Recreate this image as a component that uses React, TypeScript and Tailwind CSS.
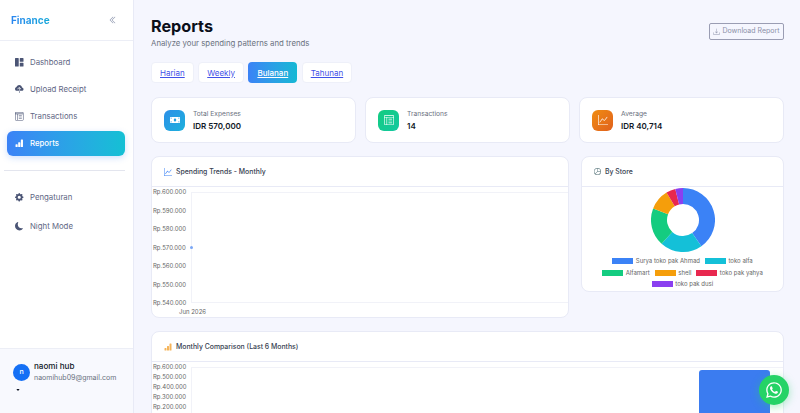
import React from 'react';
import { FaWhatsapp, FaMoneyBill } from 'react-icons/fa';
import {
  BsGrid1X2Fill,
  BsCloudUploadFill,
  BsLayoutTextWindowReverse,
  BsBarChartFill,
  BsGearFill,
  BsMoonFill,
  BsDownload,
  BsGraphUp,
  BsPieChart,
  BsChevronDoubleLeft,
  BsCaretDownFill,
} from 'react-icons/bs';

const NavItem = ({ icon, label, active }: { icon: React.ReactNode; label: string; active?: boolean }) => (
  <div className={`flex h-[25px] items-center gap-[6px] rounded-[6px] px-2 text-[7.8px] ${active ? 'bg-gradient-to-r from-[#3b82f6] to-[#14c0d4] font-medium text-white shadow-[0_2px_6px_rgba(59,130,246,0.25)]' : 'text-[#5f6785]'}`}>
    <span className={`flex w-[9px] justify-center text-[8.5px] ${active ? 'text-white' : 'text-[#4b5575]'}`}>{icon}</span>
    <span className="mt-[1px]">{label}</span>
  </div>
);

const Tab = ({ label, active }: { label: string; active?: boolean }) => (
  <a className={`flex h-[21px] items-center rounded-[4px] text-[8px] underline ${active ? 'bg-gradient-to-r from-[#3b82f6] to-[#14b8d4] px-[9px] font-medium text-white' : 'border border-[#eef0f9] bg-white px-[8px] text-[#3f51e8]'}`}>
    {label}
  </a>
);

const StatCard = ({ icon, gradient, label, value }: { icon: React.ReactNode; gradient: string; label: string; value: string }) => (
  <div className="flex h-[46px] flex-1 items-center gap-[8px] rounded-[8px] border border-[#e8eaf6] bg-white px-3">
    <div className={`flex h-[21px] w-[21px] items-center justify-center rounded-[6px] text-[10px] text-white ${gradient}`}>{icon}</div>
    <div>
      <div className="text-[6.7px] leading-[11px] text-[#6b7280]">{label}</div>
      <div className="text-[8px] font-semibold leading-[12px] text-[#111827]">{value}</div>
    </div>
  </div>
);

const CardHeader = ({ icon, title }: { icon: React.ReactNode; title: string }) => (
  <div className="flex h-[30px] items-center gap-[4px] border-b border-[#e8eaf6] pl-3 text-[6.9px] font-medium text-[#374151]">
    {icon}
    <span className="mt-[2px]">{title}</span>
  </div>
);

// donut segments, angles in degrees clockwise from the top
const segments = [
  { from: 0, to: 145, color: '#3b82f6' },
  { from: 145, to: 222, color: '#14c0d8' },
  { from: 222, to: 291, color: '#14cc80' },
  { from: 291, to: 329, color: '#f59e0b' },
  { from: 329, to: 346, color: '#e8284f' },
  { from: 346, to: 360, color: '#8b3ff0' },
];

const arc = (from: number, to: number) => {
  const p = (a: number, r: number) => {
    const t = (a * Math.PI) / 180;
    return `${(32 + r * Math.sin(t)).toFixed(2)} ${(32 - r * Math.cos(t)).toFixed(2)}`;
  };
  const large = to - from > 180 ? 1 : 0;
  return `M${p(from, 32)} A32 32 0 ${large} 1 ${p(to, 32)} L${p(to, 16)} A16 16 0 ${large} 0 ${p(from, 16)} Z`;
};

const Legend = ({ color, label }: { color: string; label: string }) => (
  <div className="flex items-center gap-[2.5px]">
    <span className="h-[6px] w-[21px]" style={{ backgroundColor: color }} />
    <span>{label}</span>
  </div>
);

export default function App() {
  return (
    <div className="relative flex h-[413px] w-[800px] overflow-hidden bg-[#f5f6fe] font-['Inter',sans-serif]">
      <aside className="flex w-[134px] shrink-0 flex-col border-r border-[#e8eaf6] bg-white">
        <div className="flex h-[41px] shrink-0 items-center justify-between border-b border-[#eceef6] pl-[11px] pr-[16px]">
          <span className="bg-gradient-to-r from-[#2b86f0] to-[#14a8d8] bg-clip-text text-[10px] font-bold text-transparent">Finance</span>
          <BsChevronDoubleLeft className="text-[8px] text-[#8a93ab]" />
        </div>
        <nav className="flex flex-col gap-[2px] px-[7px] pr-2 pt-[9px]">
          <NavItem icon={<BsGrid1X2Fill />} label="Dashboard" />
          <NavItem icon={<BsCloudUploadFill />} label="Upload Receipt" />
          <NavItem icon={<BsLayoutTextWindowReverse />} label="Transactions" />
          <NavItem icon={<BsBarChartFill />} label="Reports" active />
        </nav>
        <div className="mx-1 mr-2 mt-[14px] border-t border-[#e3e5ee]" />
        <div className="flex flex-col gap-[4px] px-[7px] pt-[14px]">
          <NavItem icon={<BsGearFill />} label="Pengaturan" />
          <NavItem icon={<BsMoonFill />} label="Night Mode" />
        </div>
        <div className="mt-auto flex h-[65px] shrink-0 flex-col border-t border-[#eceef6] bg-[#f8f9fe] pl-[13px] pt-[12px]">
          <div className="flex items-center gap-[4px]">
            <div className="flex h-[17px] w-[17px] items-center justify-center rounded-full bg-[#1570f5] text-[7px] font-medium text-white">n</div>
            <div>
              <div className="text-[8.1px] font-medium leading-[11px] text-[#111827]">naomi hub</div>
              <div className="text-[7px] leading-[11px] text-[#6b7280]">naomihub09@gmail.com</div>
            </div>
          </div>
          <BsCaretDownFill className="ml-[3px] mt-[5px] text-[4px] text-[#111827]" />
        </div>
      </aside>

      <main className="flex min-w-0 flex-1 flex-col gap-[13px] overflow-hidden pl-[17px] pr-4 pt-[15px]">
        <div className="mb-[1px]">
          <div className="flex items-start justify-between">
            <div>
              <h1 className="text-[16.2px] font-bold leading-[22px] text-[#0b0f1a]">Reports</h1>
              <p className="text-[7.8px] leading-[12px] text-[#6b7280]">Analyze your spending patterns and trends</p>
            </div>
            <button className="mt-[8px] flex h-[17px] w-[75px] items-center justify-center gap-[2px] rounded-[2px] border border-[#9a9db3] text-[7px] text-[#8b90a8]">
              <BsDownload className="text-[7px]" />
              Download Report
            </button>
          </div>
          <div className="mt-[13px] flex gap-[4.5px]">
            <Tab label="Harian" />
            <Tab label="Weekly" />
            <Tab label="Bulanan" active />
            <Tab label="Tahunan" />
          </div>
        </div>

        <div className="flex gap-[9px]">
          <StatCard icon={<FaMoneyBill />} gradient="bg-gradient-to-br from-[#2c8fe8] to-[#1cb0dc]" label="Total Expenses" value="IDR 570,000" />
          <StatCard icon={<BsLayoutTextWindowReverse />} gradient="bg-gradient-to-br from-[#14cc80] to-[#14c8a0]" label="Transactions" value="14" />
          <StatCard icon={<BsGraphUp />} gradient="bg-gradient-to-br from-[#f08c10] to-[#e0601c]" label="Average" value="IDR 40,714" />
        </div>

        <div className="flex items-start gap-3">
          <section className="h-[162px] w-[418px] shrink-0 rounded-[8px] border border-[#e8eaf6] bg-white">
            <CardHeader icon={<BsGraphUp className="text-[8px] text-[#3b82f6]" />} title="Spending Trends - Monthly" />
            <div className="flex h-[120px] pl-[1px] pt-[1px]">
              <div className="flex w-[38px] flex-col justify-between text-[6px] leading-[8px] text-[#666666]">
                <span>Rp.600.000</span>
                <span>Rp.590.000</span>
                <span>Rp.580.000</span>
                <span>Rp.570.000</span>
                <span>Rp.560.000</span>
                <span>Rp.550.000</span>
                <span>Rp.540.000</span>
              </div>
              <div className="relative my-[4px] flex-1 border-b border-l border-t border-[#f1f2f8]">
                <span className="absolute -left-[2px] top-[53px] h-[3px] w-[3px] rounded-full bg-[#7aa7f5]" />
              </div>
            </div>
            <div className="mt-[1px] pl-[27px] text-[6px] leading-[8px] text-[#666666]">Jun 2026</div>
          </section>

          <section className="h-[136px] flex-1 rounded-[8px] border border-[#e8eaf6] bg-white">
            <CardHeader icon={<BsPieChart className="text-[7px] text-[#4a6a70]" />} title="By Store" />
            <svg viewBox="0 0 64 64" className="mx-auto mt-[1px] h-[64px] w-[64px]">
              {segments.map((s) => (
                <path key={s.color} d={arc(s.from, s.to)} fill={s.color} />
              ))}
            </svg>
            <div className="mt-[5px] flex flex-wrap justify-center gap-x-[5px] gap-y-[3.5px] px-2 text-[6px] leading-[8px] text-[#666666]">
              <Legend color="#3b82f6" label="Surya toko pak Ahmad" />
              <Legend color="#14c0d8" label="toko alfa" />
              <Legend color="#14cc80" label="Alfamart" />
              <Legend color="#f59e0b" label="shell" />
              <Legend color="#e8284f" label="toko pak yahya" />
              <Legend color="#8b3ff0" label="toko pak dusi" />
            </div>
          </section>
        </div>

        <section className="h-[100px] shrink-0 rounded-[8px] border border-[#e8eaf6] bg-white">
          <CardHeader icon={<BsBarChartFill className="text-[8px] text-[#f5b45a]" />} title="Monthly Comparison (Last 6 Months)" />
          <div className="flex pl-[1px] pt-[1px]">
            <div className="flex h-[48px] w-[38px] flex-col justify-between text-[6px] leading-[8px] text-[#666666]">
              <span>Rp.600.000</span>
              <span>Rp.500.000</span>
              <span>Rp.400.000</span>
              <span>Rp.300.000</span>
              <span>Rp.200.000</span>
            </div>
            <div className="mt-[4px] flex h-[60px] flex-1 justify-end border-l border-t border-[#f1f2f8] pr-[13px]">
              <div className="mt-[2px] w-[71px] rounded-t-[3px] bg-[#3b7cf0]" />
            </div>
          </div>
        </section>
      </main>

      <div className="absolute left-[759px] top-[375px] flex h-[30px] w-[30px] items-center justify-center rounded-full bg-[#25d366] text-[18px] text-white shadow-[0_2px_8px_rgba(37,211,102,0.4)]">
        <FaWhatsapp />
      </div>
    </div>
  );
}
